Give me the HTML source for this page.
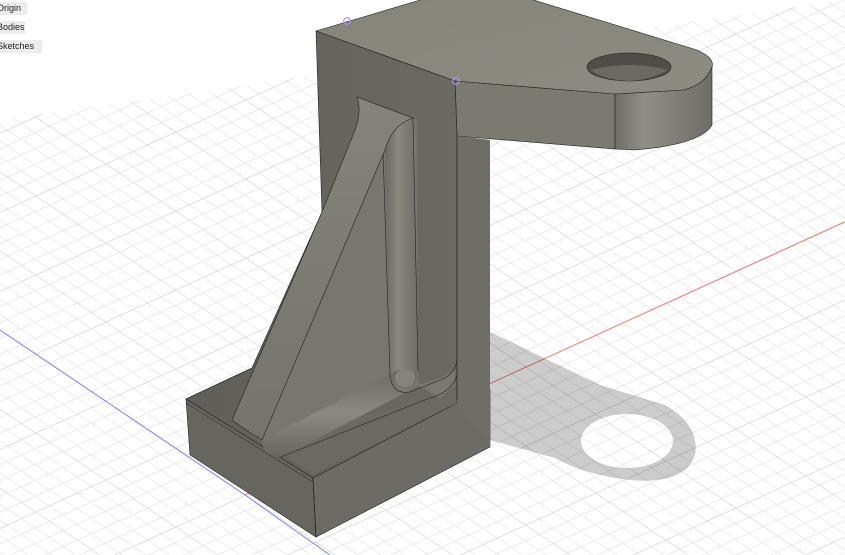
<!DOCTYPE html>
<html><head><meta charset="utf-8"><style>
html,body{margin:0;padding:0;width:845px;height:555px;overflow:hidden;background:#fff;font-family:"Liberation Sans",sans-serif}
.lb{position:absolute;left:0;background:#ececec;font-size:9px;color:#222;height:13px;line-height:13px;padding:0 4px 0 0;text-indent:-3px}
svg{position:absolute;left:0;top:0}
</style></head><body>
<svg width="845" height="555" viewBox="0 0 845 555">
<defs>
<pattern id="g" patternUnits="userSpaceOnUse" width="5" height="5" patternTransform="matrix(14,-6.4,14,9.4,245,495)">
<path d="M0 1H5M0 2H5M0 3H5M0 4H5M1 0V5M2 0V5M3 0V5M4 0V5" stroke="#ececec" stroke-width="0.07" fill="none"/>
<path d="M0 0H5M0 0V5" stroke="#d6d6d6" stroke-width="0.1" fill="none"/>
</pattern>
<linearGradient id="wall" x1="0" y1="0" x2="1" y2="0"><stop offset="0" stop-color="#5f5e57"/><stop offset="1" stop-color="#6a6962"/></linearGradient>
<linearGradient id="end" x1="0" y1="0" x2="1" y2="0"><stop offset="0" stop-color="#6f6e66"/><stop offset="0.3" stop-color="#908f86"/><stop offset="1" stop-color="#6e6d66"/></linearGradient>
<linearGradient id="fil" x1="0" y1="0" x2="1" y2="0"><stop offset="0" stop-color="#6a6962"/><stop offset="0.4" stop-color="#8a8980"/><stop offset="1" stop-color="#6d6c65"/></linearGradient>
<linearGradient id="fil2" x1="0" y1="0" x2="0" y2="1"><stop offset="0" stop-color="#6a6962"/><stop offset="0.5" stop-color="#8b8a82"/><stop offset="1" stop-color="#66655e"/></linearGradient>
<linearGradient id="top" x1="0" y1="0" x2="1" y2="1"><stop offset="0" stop-color="#858479"/><stop offset="1" stop-color="#8d8c82"/></linearGradient>
<linearGradient id="gus" x1="0" y1="0" x2="0" y2="1"><stop offset="0" stop-color="#85847b"/><stop offset="1" stop-color="#75746c"/></linearGradient>
</defs>
<polygon points="0,120 845,0 845,555 0,555" fill="url(#g)"/>
<line x1="245" y1="495" x2="845" y2="222" stroke="#f08080" stroke-width="1"/>
<line x1="0" y1="330" x2="245" y2="495" stroke="#8080f0" stroke-width="1"/>
<line x1="245" y1="495" x2="330" y2="555" stroke="#8080f0" stroke-width="1"/>
<path d="M490 332 L600 385 L665 405 Q700 425 695 455 Q685 485 630 480 Q585 475 555 458 L490 440 Z" fill="#000" fill-opacity="0.2"/>
<ellipse cx="627" cy="441" rx="46" ry="27" fill="#fff"/>
<ellipse cx="627" cy="441" rx="46" ry="27" fill="url(#g)"/>
<polygon points="457,136 490,140 490,447 457,420" fill="#6c6b64"/>
<polygon points="455,81 615,94 615,149 457,136" fill="#7b7a71" stroke="#222" stroke-width="0.6"/>
<path d="M615 94 L683 90 Q705 83 712 67 L712 125 Q700 145 633 150 L615 149 Z" fill="url(#end)" stroke="#222" stroke-width="0.6"/>
<path d="M316 31 L427 -2 L527 -2 L697 50 Q715 58 712 67 Q705 85 683 90 L615 94 L455 81 Z" fill="url(#top)" stroke="#222" stroke-width="0.6"/>
<ellipse cx="629" cy="67" rx="42" ry="14" fill="#4e4d47" stroke="#222" stroke-width="0.6"/>
<path d="M590 70 Q629 60 668 70 Q650 80 629 81 Q605 80 590 70Z" fill="#6a6962"/>
<polygon points="316,31 455,81 457,136 457,403 313,478 186,399 252,368 322,212" fill="url(#wall)" stroke="#222" stroke-width="0.6"/>
<polygon points="186,399 313,478 316,537 190,455" fill="#66655e" stroke="#222" stroke-width="0.6"/>
<line x1="186" y1="403" x2="313" y2="482" stroke="#222" stroke-width="0.5"/>
<polygon points="313,478 457,403 490,390 490,447 316,537" fill="#6c6b64" stroke="#222" stroke-width="0.6"/>
<polygon points="457,136 490,140 490,447 457,403" fill="#6e6d66"/>
<line x1="457" y1="136" x2="457" y2="400" stroke="#222" stroke-width="0.6"/>
<line x1="316" y1="537" x2="313" y2="478" stroke="#222" stroke-width="0.6"/>
<polygon points="385,140 413,118 417,120 418,385 270,450 262,440" fill="#78776f"/>
<path d="M385 150 Q395 122 413 118 L418 375 L390 382 Z" fill="url(#fil)"/>
<polygon points="262,440 440,398 457,403 313,474 240,428" fill="#6b6a62"/>
<path d="M262 440 L398 370 Q418 368 420 385 L280 458 Q262 455 262 440Z" fill="url(#fil2)"/>
<path d="M418 385 L440 398 L455 385 L455 370 Q440 380 418 385Z" fill="#7a7971"/>
<ellipse cx="405" cy="378" rx="10" ry="9" fill="#85847b"/>
<path d="M383 150 L390 375 Q392 395 410 392 L440 380 Q455 375 457 360 M413 118 L418 370 M278 458 L430 398 Q452 392 457 375" stroke="#222" stroke-width="0.6" fill="none"/>
<path d="M357 97 L413 118 Q392 125 385 150 L262 440 Q245 430 232 420 L322 212 L355 130 Q362 110 357 97Z" fill="url(#gus)" stroke="#222" stroke-width="0.6"/>
<line x1="186" y1="399" x2="252" y2="368" stroke="#222" stroke-width="0.6"/>
<circle cx="347" cy="21" r="3.3" fill="none" stroke="#b38cf0" stroke-width="1.2"/>
<circle cx="456" cy="81" r="3.3" fill="none" stroke="#b38cf0" stroke-width="1.2"/>
</svg>
<div class="lb" style="top:2px;width:23px">Origin</div>
<div class="lb" style="top:21px;width:21px">Bodies</div>
<div class="lb" style="top:40px;width:38px">Sketches</div>
</body></html>
